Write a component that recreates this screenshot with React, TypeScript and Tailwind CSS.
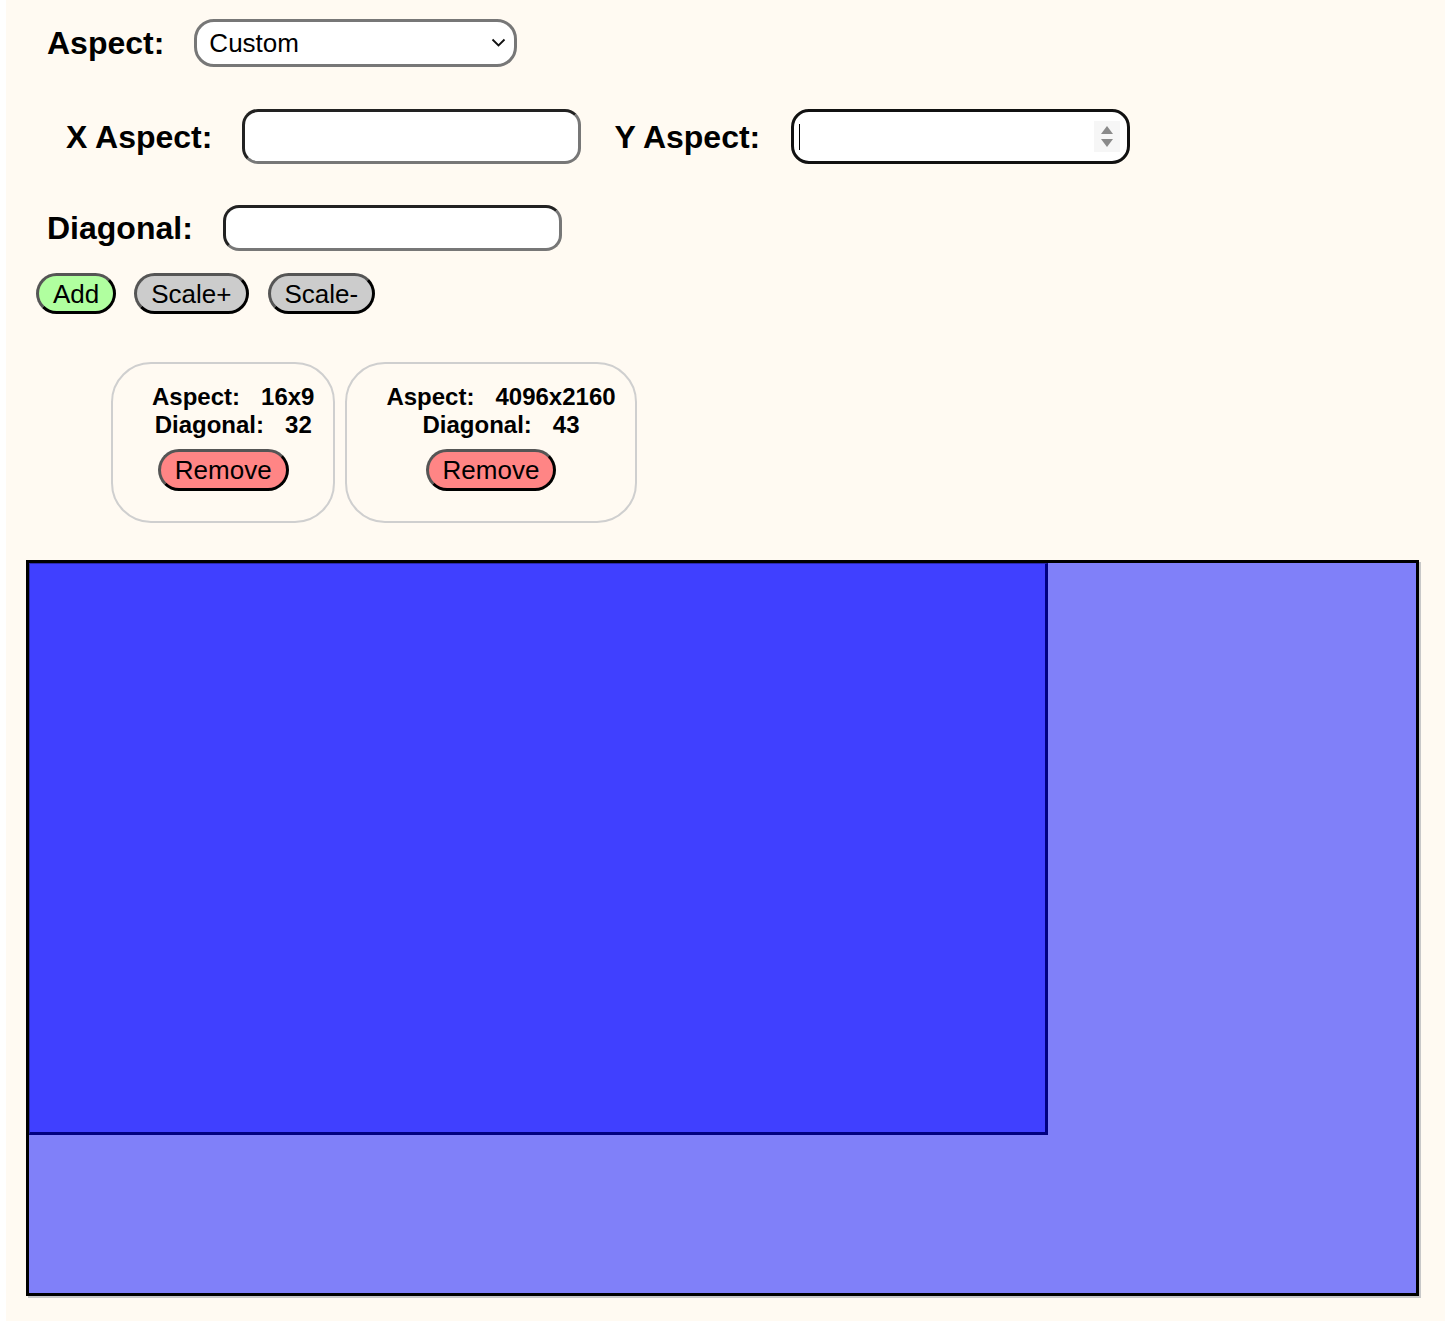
import React from 'react';

const screens = [
  { aspect: '16x9', diagonal: '32' },
  { aspect: '4096x2160', diagonal: '43' },
];

function Label({ children, className = '' }: { children: React.ReactNode; className?: string }) {
  return <span className={`text-[32px] font-bold leading-none text-black ${className}`}>{children}</span>;
}

function PillButton({ children, color, h = 'h-[41px]' }: { children: React.ReactNode; color: string; h?: string }) {
  return (
    <button
      className={`flex ${h} items-center rounded-full border-[3px] border-t-[#555] border-l-[#555] border-b-black border-r-black px-[14px] text-[26px] leading-none text-black ${color}`}
    >
      {children}
    </button>
  );
}

export default function App() {
  return (
    <div className="min-h-screen bg-white font-['Liberation_Sans',Arial,sans-serif]">
      <div className="ml-[6px] min-h-[1321px] bg-[#fffaf2] pt-[19px]">
        {/* aspect select */}
        <div className="flex h-[48px] items-center pl-[41px]">
          <Label>Aspect:</Label>
          <div className="relative ml-[30px] h-[48px] w-[323px]">
            <select
              defaultValue="custom"
              className="h-full w-full appearance-none rounded-[20px] border-[3px] border-[#777] bg-white pl-[12px] text-[26px] text-black outline-none"
            >
              <option value="custom">Custom</option>
              <option value="16x9">16x9</option>
              <option value="4096x2160">4096x2160</option>
            </select>
            <svg
              className="pointer-events-none absolute right-[11px] top-[19px]"
              width="15"
              height="9"
              viewBox="0 0 15 9"
              fill="none"
            >
              <path d="M1.5 1.5 L7.5 7.5 L13.5 1.5" stroke="#111" strokeWidth="1.8" />
            </svg>
          </div>
        </div>

        {/* x / y aspect */}
        <div className="mt-[42px] flex h-[55px] items-center pl-[60px]">
          <Label>X Aspect:</Label>
          <input
            className="ml-[30px] h-[55px] w-[339px] rounded-[16px] border-[3px] border-t-[#222] border-l-[#222] border-b-[#777] border-r-[#777] bg-white px-3 text-[26px] outline-none"
          />
          <Label className="ml-[33px]">Y Aspect:</Label>
          <div className="relative ml-[31px] h-[55px] w-[339px]">
            <input className="h-full w-full rounded-[18px] border-[3px] border-[#111] bg-white px-3 text-[26px] outline-none" />
            <span className="pointer-events-none absolute left-[8px] top-[15px] h-[26px] w-px bg-black" />
            <div className="pointer-events-none absolute right-[10px] top-[12px] flex h-[31px] w-[26px] items-center justify-center bg-[#f6f6f6]">
              <svg width="14" height="26" viewBox="0 0 14 26">
                <path d="M7 2 L13 10 L1 10 Z" fill="#8a8a8a" />
                <path d="M1 15 L13 15 L7 23 Z" fill="#8a8a8a" />
              </svg>
            </div>
          </div>
        </div>

        {/* diagonal */}
        <div className="mt-[41px] flex h-[46px] items-center pl-[41px]">
          <Label>Diagonal:</Label>
          <input
            className="ml-[30px] h-[46px] w-[339px] rounded-[16px] border-[3px] border-t-[#222] border-l-[#222] border-b-[#777] border-r-[#777] bg-white px-3 text-[26px] outline-none"
          />
        </div>

        {/* actions */}
        <div className="mt-[22px] flex h-[41px] items-center gap-[18px] pl-[30px]">
          <PillButton color="bg-[#b0ff9f]">Add</PillButton>
          <PillButton color="bg-[#cccccc]">Scale+</PillButton>
          <div className="ml-[1px]">
            <PillButton color="bg-[#cccccc]">Scale-</PillButton>
          </div>
        </div>

        {/* screen cards */}
        <div className="mt-[48px] flex gap-[10px] pl-[105px]">
          {screens.map((s) => (
            <div
              key={s.aspect}
              className="flex flex-col items-center rounded-[40px] border-2 border-[#cfcfcf] px-[19px] pt-[19px] pb-[30px]"
            >
              <div className="flex gap-[21px] pl-[20px] text-[24px] font-bold leading-[28px] text-black">
                <span>Aspect:</span>
                <span>{s.aspect}</span>
              </div>
              <div className="flex gap-[21px] pl-[20px] text-[24px] font-bold leading-[28px] text-black">
                <span>Diagonal:</span>
                <span>{s.diagonal}</span>
              </div>
              <div className="mt-[10px]">
                <PillButton color="bg-[#ff8585]" h="h-[42px]">
                  Remove
                </PillButton>
              </div>
            </div>
          ))}
        </div>

        {/* preview */}
        <div className="ml-[20px] mt-[37px] w-[1393px]">
          <div className="h-[736px] w-[1393px] border-[3px] border-black bg-[#8080f9] shadow-[2px_2px_0_#c8c8c8]">
            <div className="h-[572px] w-[1019px] border-[3px] border-t-[1px] border-l-[1px] border-[#000080] border-t-[#2a2ab0] border-l-[#2a2ab0] bg-[#4040ff]" />
          </div>
        </div>
      </div>
    </div>
  );
}
